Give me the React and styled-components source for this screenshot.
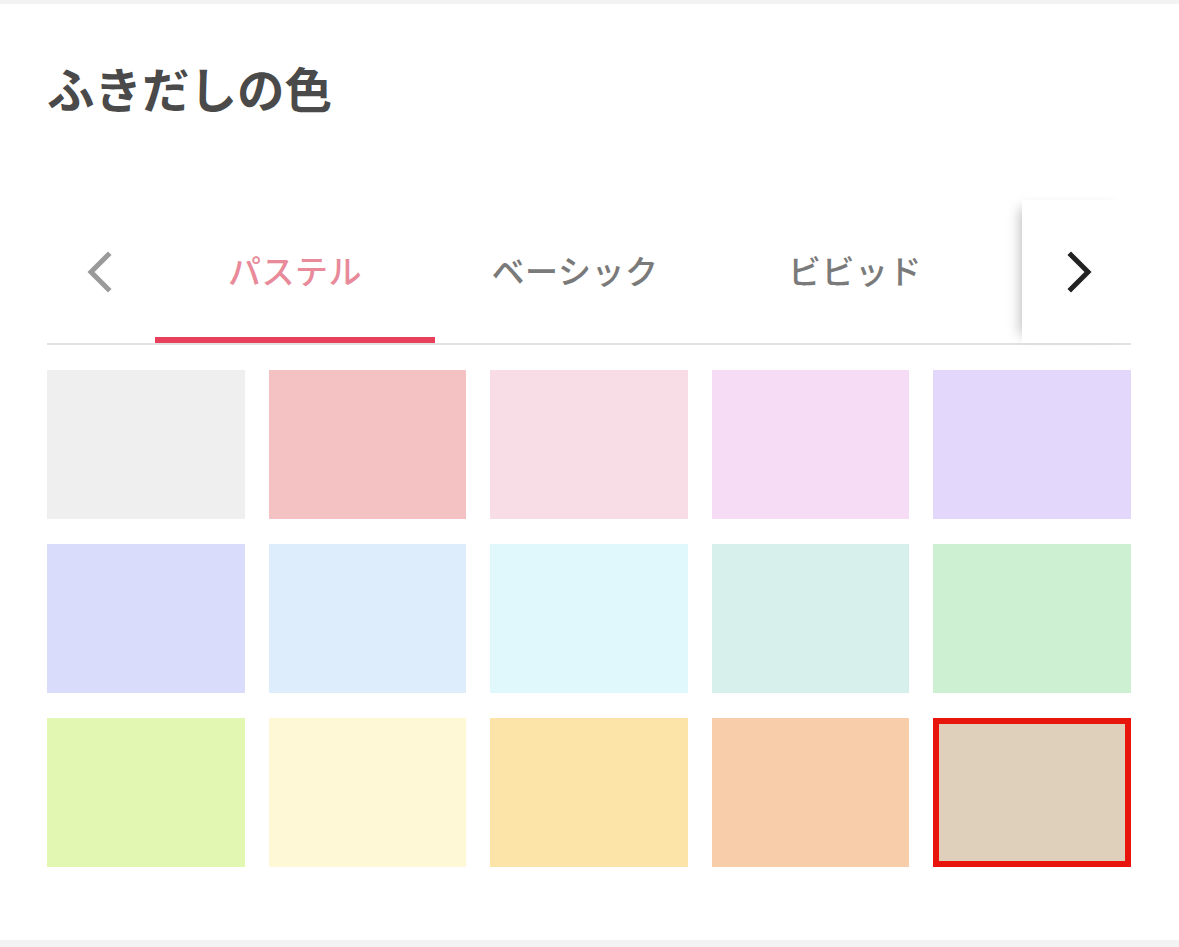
import React, { useState } from "react";
import styled, { createGlobalStyle } from "styled-components";

const GlobalStyle = createGlobalStyle`
  html, body {
    margin: 0;
    padding: 0;
    background: #f3f3f3;
    font-family: "Noto Sans CJK JP", "Noto Sans", sans-serif;
  }
`;

const Card = styled.div`
  margin-top: 4px;
  height: 936px;
  background: #ffffff;
  padding: 0 48px 0 47px;
  box-sizing: border-box;
`;

const Title = styled.h2`
  margin: 0;
  padding-top: 58px;
  height: 52px;
  line-height: 52px;
  font-size: 47.5px;
  font-weight: 700;
  color: #4a4a4a;
  letter-spacing: 0;
`;

const TabBar = styled.div`
  display: flex;
  margin-top: 86px;
  height: 143px;
  border-bottom: 2px solid #e2e2e2;
`;

const ArrowBox = styled.button`
  flex: none;
  width: ${p => p.$w}px;
  display: flex;
  align-items: center;
  justify-content: center;
  border: none;
  background: #fff;
  padding: ${p => (p.$right ? "0 0 0 6px" : "0 4px 0 0")};
  cursor: pointer;
  position: relative;
  box-shadow: ${p => (p.$right ? "-10px 0 12px -8px rgba(0,0,0,0.25)" : "none")};
`;

const TabScroller = styled.div`
  flex: 1;
  display: flex;
  overflow: hidden;
`;

const Tab = styled.div`
  flex: none;
  width: 280px;
  position: relative;
  display: flex;
  align-items: center;
  justify-content: center;
  padding-bottom: 4px;
  font-size: 33px;
  font-weight: 500;
  letter-spacing: 0.5px;
  color: ${p => (p.$active ? "#e88a99" : "#7a7a7a")};
  cursor: pointer;

  &::after {
    content: "";
    position: absolute;
    left: 0;
    right: 0;
    bottom: 0;
    height: 6px;
    background: ${p => (p.$active ? "#e8405a" : "transparent")};
  }
`;

const Grid = styled.div`
  display: grid;
  grid-template-columns: repeat(5, 1fr);
  grid-auto-rows: 149px;
  column-gap: 24px;
  row-gap: 25px;
  margin-top: 25px;
`;

const Swatch = styled.div`
  background: ${p => p.$color};
  box-sizing: border-box;
  border: ${p => (p.$selected ? "6px solid #e8150c" : "none")};
  cursor: pointer;
`;

const colors = [
  "#efefef", "#f4c2c2", "#f9dde6", "#f6ddf5", "#e3d8fc",
  "#d9dcfb", "#deedfb", "#e0f7fc", "#d7f0ec", "#cdefd2",
  "#e1f7b2", "#fef8d6", "#fce4a9", "#f8cdaa", "#dfd0bb",
];

const tabs = ["パステル", "ベーシック", "ビビッド"];

const Chevron = ({ dir, color }) => (
  <svg width="34" height="44" viewBox="0 0 34 44">
    <path
      d={dir === "left" ? "M26 5 L9 22 L26 39" : "M8 5 L25 22 L8 39"}
      fill="none"
      stroke={color}
      strokeWidth="5"
      strokeLinecap="square"
    />
  </svg>
);

export default function App() {
  const [active, setActive] = useState(0);
  const [selected, setSelected] = useState(14);

  return (
    <>
      <GlobalStyle />
      <Card>
        <Title>ふきだしの色</Title>
        <TabBar>
          <ArrowBox $w={108}>
            <Chevron dir="left" color="#9a9a9a" />
          </ArrowBox>
          <TabScroller>
            {tabs.map((t, i) => (
              <Tab key={t} $active={i === active} onClick={() => setActive(i)}>
                {t}
              </Tab>
            ))}
          </TabScroller>
          <ArrowBox $w={109} $right>
            <Chevron dir="right" color="#222222" />
          </ArrowBox>
        </TabBar>
        <Grid>
          {colors.map((c, i) => (
            <Swatch
              key={c}
              $color={c}
              $selected={i === selected}
              onClick={() => setSelected(i)}
            />
          ))}
        </Grid>
      </Card>
    </>
  );
}
